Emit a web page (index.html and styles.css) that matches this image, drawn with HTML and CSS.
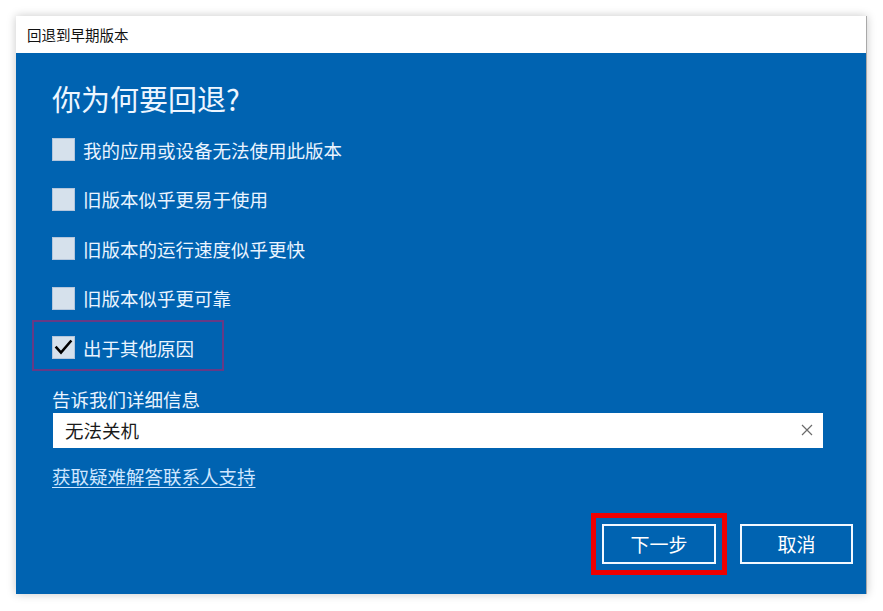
FILE: index.html
```html
<!DOCTYPE html>
<html lang="zh-CN">
<head>
<meta charset="utf-8">
<title>回退到早期版本</title>
<link rel="stylesheet" href="styles.css">
</head>
<body>
<div class="dialog">
  <div class="titlebar">回退到早期版本</div>
  <div class="content">
    <h1 class="heading">你为何要回退?</h1>
    <ul class="options">
      <li class="option"><span class="box"></span><span class="label">我的应用或设备无法使用此版本</span></li>
      <li class="option"><span class="box"></span><span class="label">旧版本似乎更易于使用</span></li>
      <li class="option"><span class="box"></span><span class="label">旧版本的运行速度似乎更快</span></li>
      <li class="option"><span class="box"></span><span class="label">旧版本似乎更可靠</span></li>
      <li class="option option-marked"><span class="box checked"><svg viewBox="0 0 23 23" width="23" height="23"><polyline points="4.5,11.5 9,16.5 18.5,5.5" fill="none" stroke="#000" stroke-width="2.6" stroke-linecap="square"/></svg></span><span class="label">出于其他原因</span></li>
    </ul>
    <div class="field-label">告诉我们详细信息</div>
    <div class="input"><span class="input-text">无法关机</span><svg class="clear" viewBox="0 0 12 12" width="12" height="12"><path d="M1 1L11 11M11 1L1 11" stroke="#6b6b6b" stroke-width="1.2" fill="none"/></svg></div>
    <a class="link" href="#">获取疑难解答联系人支持</a>
    <div class="actions">
      <button class="btn btn-next">下一步</button>
      <button class="btn">取消</button>
    </div>
  </div>
</div>
</body>
</html>
```
FILE: styles.css
```css
html, body {
  margin: 0;
  padding: 0;
  background: #ffffff;
}
body {
  width: 883px;
  height: 611px;
  overflow: hidden;
  font-family: "Noto Sans CJK SC", "Noto Sans", sans-serif;
}
.dialog {
  margin: 16px 0 0 16px;
  width: 851px;
  height: 578px;
  box-sizing: border-box;
  border-right: 1px solid #a9a9a9;
  box-shadow: 0 0 9px rgba(0, 0, 0, 0.22);
  display: flex;
  flex-direction: column;
  background: #0063b1;
}
.titlebar {
  height: 37px;
  background: #ffffff;
  color: #111;
  font-size: 14.5px;
  line-height: 37px;
  padding-left: 11px;
  flex: none;
}
.content {
  flex: 1;
  background: #0063b1;
  color: #eaf4ff;
  padding: 25px 13px 0 36px;
  display: flex;
  flex-direction: column;
}
.heading {
  margin: 0;
  font-size: 29px;
  font-weight: 400;
  line-height: 40px;
  height: 40px;
  color: #eef6ff;
}
.options {
  list-style: none;
  margin: 7px 0 0 0;
  padding: 0;
}
.option {
  height: 49.5px;
  display: flex;
  align-items: center;
  position: relative;
}
.box {
  width: 23px;
  height: 23px;
  box-sizing: border-box;
  background: #d6e1ec;
  border: 1px solid #b4c6dc;
  flex: none;
  display: flex;
}
.box svg {
  margin: -1px;
}
.label {
  margin-left: 8px;
  font-size: 18.5px;
  line-height: 24px;
  color: #eaf4ff;
}
.option-marked::after {
  content: "";
  position: absolute;
  left: -20px;
  top: -3px;
  width: 192px;
  height: 51px;
  box-sizing: border-box;
  border: 2px solid #663a86;
}
.field-label {
  margin-top: 13px;
  font-size: 18.5px;
  line-height: 26px;
  color: #eaf4ff;
}
.input {
  margin-top: 1px;
  margin-left: 1px;
  width: 770px;
  height: 35px;
  background: #ffffff;
  display: flex;
  align-items: center;
  justify-content: space-between;
  padding: 0 10px 0 12px;
  box-sizing: border-box;
}
.input-text {
  font-size: 18.5px;
  color: #1a1a1a;
  line-height: 24px;
}
.clear {
  flex: none;
}
.link {
  margin-top: 16px;
  align-self: flex-start;
  font-size: 18.5px;
  line-height: 24px;
  color: #cfe6ff;
  text-decoration: underline;
  text-underline-offset: 3px;
}
.actions {
  margin-top: 36px;
  display: flex;
  justify-content: flex-end;
  gap: 24px;
}
.btn {
  width: 114px;
  height: 40px;
  box-sizing: border-box;
  background: #0063b1;
  border: 2px solid #f2f8ff;
  color: #ffffff;
  font-family: "Noto Sans CJK SC", "Noto Sans", sans-serif;
  font-size: 19px;
  padding: 0;
}
.btn + .btn {
  width: 113px;
}
.btn-next {
  outline: 5px solid #ee0000;
  outline-offset: 6px;
}
```
